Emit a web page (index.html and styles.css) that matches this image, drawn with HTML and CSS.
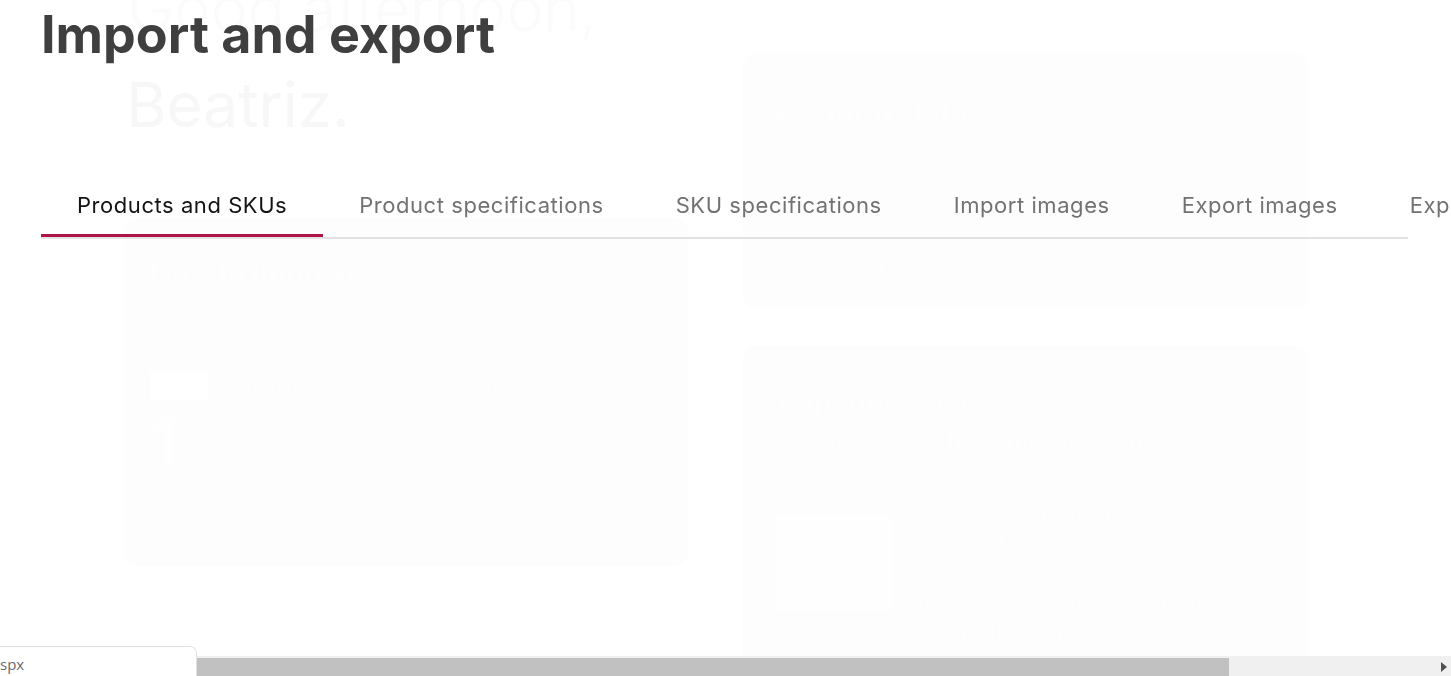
FILE: index.html
```html
<!DOCTYPE html>
<html lang="en">
<head>
<meta charset="utf-8">
<title>Import and export</title>
<link rel="stylesheet" href="styles.css">
</head>
<body>
<div class="ghost" aria-hidden="true">
  <div class="ghost-greet">Good afternoon,</div>
  <div class="ghost-name">Beatriz.</div>
  <div class="ghost-grid">
    <div class="ghost-left">
      <div class="gcard improve">
        <div class="g-h2">How to improve</div>
        <div class="g-cat">CATALOG</div>
        <div class="g-pills"><span class="g-pill"></span><span class="g-pilltxt">Yesterday &nbsp; 7 days &nbsp; 3 weeks &nbsp; 3 months</span></div>
        <div class="g-big">1</div>
        <div class="g-link">popular products without stock ↗</div>
      </div>
    </div>
    <div class="ghost-right">
      <div class="gcard status">
        <div class="g-h2">Platform status</div>
        <div class="g-link status-link">See detailed status →</div>
      </div>
      <div class="gcard news">
        <div class="g-h2">Announcements</div>
        <div class="g-sub">Latest updates from the Platform</div>
        <div class="news-row">
          <div class="news-img"></div>
          <div class="news-txt">
            <div>Order Management mobile</div>
            <div>Redefined</div>
            <div>Coordination</div>
            <div>Order Management mobile feed</div>
            <div>More multi-channel</div>
          </div>
        </div>
      </div>
    </div>
  </div>
</div>

<div class="overlay">
  <h1 class="title">Import and export</h1>
  <nav class="tabs">
    <div class="tab active">Products and SKUs</div>
    <div class="tab">Product specifications</div>
    <div class="tab">SKU specifications</div>
    <div class="tab">Import images</div>
    <div class="tab">Export images</div>
    <div class="tab">Export specifications</div>
  </nav>
</div>

<div class="spx">spx</div>
<div class="hscroll">
  <div class="hthumb"></div>
  <div class="harrow"></div>
</div>
</body>
</html>
```
FILE: styles.css
```css
html, body {
  margin: 0;
  padding: 0;
  width: 1451px;
  height: 676px;
  overflow: hidden;
  background: #ffffff;
  font-family: Inter, "Noto Sans", sans-serif;
}

/* faint background dashboard */
.ghost {
  padding-left: 124px;
  width: 1185px;
}
.ghost-greet {
  font-size: 62px;
  font-weight: 300;
  color: #fbfbfb;
  line-height: 1;
  margin-top: -22px;
  height: 62px;
  padding-left: 4px;
}
.ghost-name {
  font-size: 62px;
  font-weight: 400;
  color: #f7f7f7;
  line-height: 1;
  margin-top: 34px;
  padding-left: 2px;
}
.ghost-grid {
  display: flex;
  gap: 55px;
  margin-top: -83px;
}
.ghost-left {
  width: 564px;
  padding-top: 165px;
}
.ghost-right {
  width: 565px;
  display: flex;
  flex-direction: column;
  gap: 37px;
}
.gcard {
  background: #fdfdfd;
  border-radius: 14px;
  box-sizing: border-box;
  color: #fefefe;
  font-weight: 700;
}
.improve {
  height: 348px;
  padding: 36px 26px;
}
.status {
  height: 256px;
  padding: 42px 32px;
}
.news {
  height: 340px;
  padding: 40px 32px;
}
.g-h2 {
  font-size: 29px;
  letter-spacing: -0.5px;
}
.g-cat {
  font-size: 17px;
  margin-top: 40px;
  padding-bottom: 8px;
  border-bottom: 1px solid #fbfbfb;
}
.g-pills {
  display: flex;
  align-items: center;
  gap: 6px;
  margin-top: 14px;
}
.g-pill {
  width: 58px;
  height: 27px;
  background: #ffffff;
}
.g-pilltxt {
  font-size: 18px;
}
.g-big {
  font-size: 64px;
  line-height: 76px;
  margin-top: 4px;
}
.g-link {
  font-size: 18px;
  margin-top: 6px;
}
.status-link {
  margin-top: 128px;
}
.g-sub {
  font-size: 23px;
  margin-top: 6px;
}
.news-row {
  display: flex;
  gap: 16px;
  margin-top: 44px;
}
.news-img {
  width: 118px;
  height: 97px;
  background: #fefefe;
  margin-top: 16px;
}
.news-txt {
  font-size: 19px;
  line-height: 30px;
  color: #fefefe;
}

/* modal page over the dashboard */
.overlay {
  position: fixed;
  inset: 0;
  padding: 0 43px 0 41px;
}
.title {
  margin: 5px 0 0;
  font-size: 52px;
  font-weight: 700;
  color: #3f3f40;
  line-height: 60px;
  letter-spacing: 0;
}
.tabs {
  display: flex;
  margin-top: 127px;
  border-bottom: 2px solid #e3e3e3;
  white-space: nowrap;
}
.tab {
  flex: none;
  padding: 0 36px;
  height: 45px;
  line-height: 26px;
  box-sizing: border-box;
  font-size: 22px;
  letter-spacing: 0.55px;
  color: #727272;
}
.tab.active {
  color: #141414;
  border-bottom: 3px solid #b0134a;
}

/* bottom-left floating box */
.spx {
  position: fixed;
  left: 0;
  bottom: 0;
  width: 197px;
  height: 30px;
  box-sizing: border-box;
  background: #ffffff;
  border: 1px solid #e2e2e2;
  border-left: none;
  border-bottom: none;
  border-top-right-radius: 7px;
  font-family: "Open Sans", sans-serif;
  font-size: 15px;
  color: #6b6b6b;
  line-height: 34px;
  z-index: 3;
}

/* horizontal scrollbar */
.hscroll {
  position: fixed;
  left: 0;
  bottom: 0;
  width: 1451px;
  height: 20px;
  background: #f0f0f0;
  z-index: 2;
}
.hthumb {
  position: absolute;
  left: 0;
  top: 2px;
  bottom: 0;
  width: 1229px;
  background: #c1c1c1;
}
.harrow {
  position: absolute;
  right: 4px;
  top: 6px;
  width: 0;
  height: 0;
  border-top: 5px solid transparent;
  border-bottom: 5px solid transparent;
  border-left: 6px solid #505050;
}
```
